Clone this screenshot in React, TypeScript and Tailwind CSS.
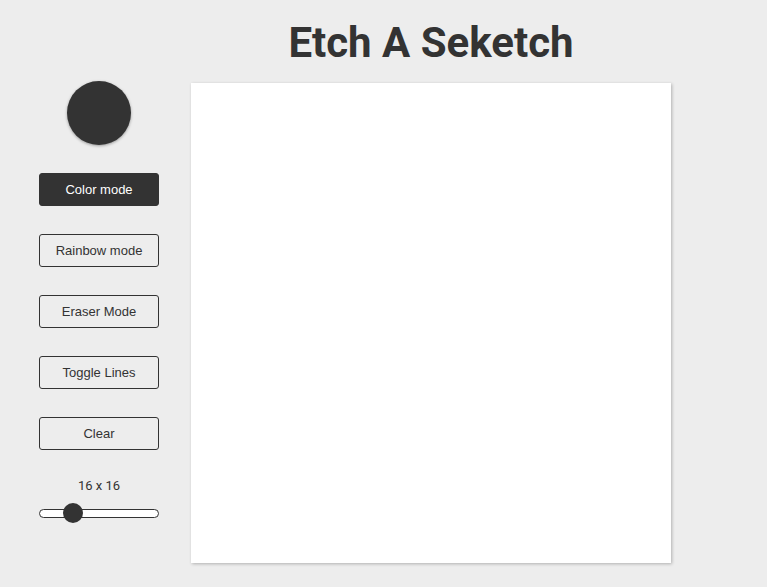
import { useState } from "react";

const buttons = ["Color mode", "Rainbow mode", "Eraser Mode", "Toggle Lines", "Clear"];

export default function App() {
  const [active] = useState("Color mode");

  return (
    <div className="min-h-screen w-full bg-[#ededed] text-[#333333] flex px-[39px] font-['Liberation_Sans',Arial,sans-serif]">
      {/* Controls */}
      <div className="w-[120px] flex flex-col items-center pt-[81px]">
        <div className="w-[64px] h-[64px] rounded-full bg-[#333333] shadow-[0_1px_3px_rgba(0,0,0,0.35)]" />
        <div className="flex flex-col gap-[28px] mt-[28px] w-full">
          {buttons.map((b) => (
            <button
              key={b}
              className={
                "h-[33px] w-full rounded-[3px] border border-[#333333] text-[13px] " +
                (b === active ? "bg-[#333333] text-white" : "bg-transparent text-[#333333]")
              }
            >
              {b}
            </button>
          ))}
        </div>
        <p className="mt-[28px] text-[13px] leading-[15px] font-['Roboto',sans-serif]">16 x 16</p>
        <div className="relative w-full h-[20px] mt-[10px] flex items-center">
          <div className="w-full h-[9px] rounded-full border border-[#333333] bg-white" />
          <div className="absolute left-[24px] top-0 w-[20px] h-[20px] rounded-full bg-[#333333]" />
        </div>
      </div>

      {/* Board */}
      <div className="ml-[32px] flex flex-col items-center">
        <h1 className="pt-[18px] h-[83px] text-[42px] leading-[49px] font-bold font-['Roboto',sans-serif]">
          Etch A Seketch
        </h1>
        <div className="w-[480px] h-[480px] bg-white shadow-[1px_1px_3px_rgba(0,0,0,0.25)]" />
      </div>
    </div>
  );
}
